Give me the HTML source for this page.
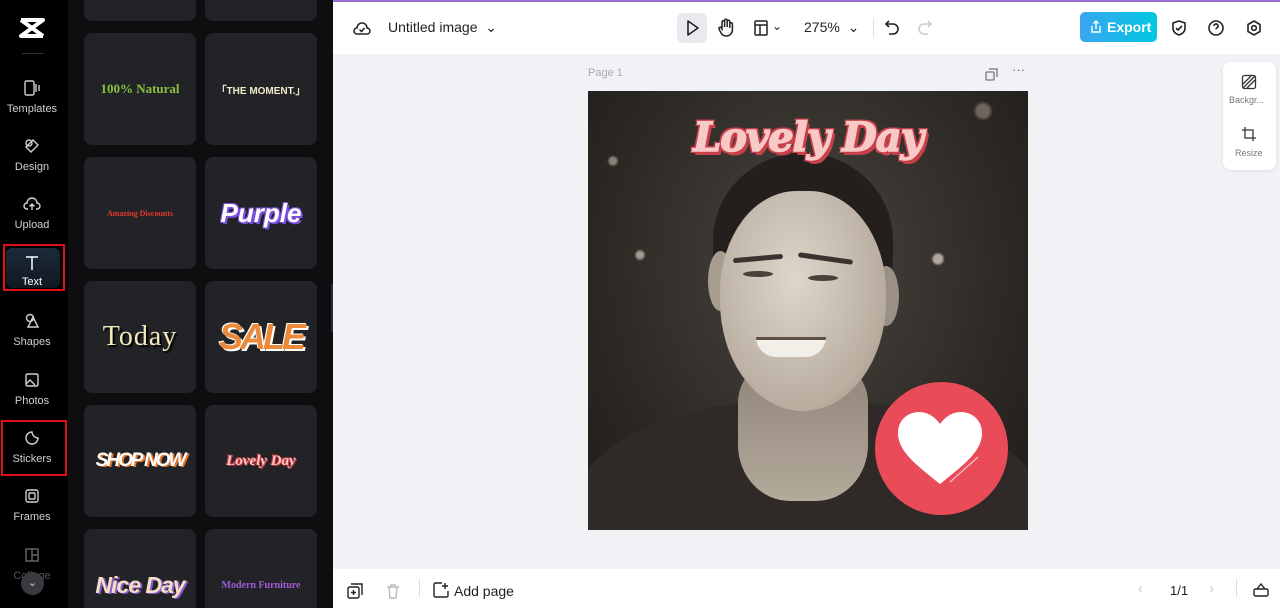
<!DOCTYPE html>
<html><head><meta charset="utf-8"><style>
*{box-sizing:border-box;margin:0;padding:0}
html,body{width:1280px;height:608px;overflow:hidden}
body{font-family:"Liberation Sans",sans-serif;background:#fff;position:relative}
.nav{position:absolute;left:0;top:0;width:68px;height:608px;background:#000;overflow:hidden}
.nav .it{position:absolute;left:0;width:64px;text-align:center;color:#cfd0d4;font-size:11px}
.nav .it svg{display:block;margin:0 auto 3px}
.panel{position:absolute;left:68px;top:0;width:265px;height:608px;background:#0e0e10;overflow:hidden}
.card{position:absolute;width:112px;height:112px;background:#222327;border-radius:8px;display:flex;align-items:center;justify-content:center;text-align:center}
.top{position:absolute;left:333px;top:0;right:0;height:54px;background:#fff;border-top:2px solid #9a6dd0}
.canvasbg{position:absolute;left:333px;top:54px;right:0;height:515px;background:#f0f2f5}
.bot{position:absolute;left:333px;top:569px;right:0;height:39px;background:#fff}
.ic{position:absolute}
</style></head><body>
<div class="nav">
  <svg class="ic" style="left:18px;top:17px" width="28" height="22" viewBox="0 0 28 22"><path d="M3 3h22L3 19h22M3 3l22 16" stroke="#fff" stroke-width="4" fill="none" stroke-linejoin="round"/></svg>
  <div style="position:absolute;left:22px;top:53px;width:22px;height:1px;background:#333"></div>
  <div class="it" style="top:79px"><svg width="18" height="18" viewBox="0 0 18 18" fill="none" stroke="#cfd0d4" stroke-width="1.4" style="margin-bottom:6px"><rect x="2" y="2" width="9" height="14" rx="1.5"/><path d="M13 5v8M16 6v6"/></svg>Templates</div>
  <div class="it" style="top:137px"><svg width="18" height="18" viewBox="0 0 18 18" fill="none" stroke="#cfd0d4" stroke-width="1.4" style="margin-bottom:6px"><circle cx="6" cy="6" r="3"/><path d="M10 3l5 5-7 7-5-5z"/></svg>Design</div>
  <div class="it" style="top:195px"><svg width="18" height="18" viewBox="0 0 18 18" fill="none" stroke="#cfd0d4" stroke-width="1.4" style="margin-bottom:6px"><path d="M5 14H4a3 3 0 010-6 5 5 0 0110 0 3 3 0 010 6h-1M9 15V9M6.5 11.5L9 9l2.5 2.5"/></svg>Upload</div>
  <div style="position:absolute;left:6px;top:248px;width:54px;height:40px;border-radius:6px;background:linear-gradient(#1c2a38,#101822)"></div>
  <div style="position:absolute;left:3px;top:244px;width:62px;height:47px;border:2px solid #e0101a"></div>
  <div class="it" style="top:254px;color:#fff"><svg width="18" height="18" viewBox="0 0 18 18" fill="none" stroke="#fff" stroke-width="1.5" style="margin-bottom:4px"><path d="M3 3h12M9 3v13"/></svg>Text</div>
  <div class="it" style="top:312px"><svg width="18" height="18" viewBox="0 0 18 18" fill="none" stroke="#cfd0d4" stroke-width="1.4" style="margin-bottom:6px"><circle cx="7" cy="6" r="3.5"/><path d="M10 5l5 10H5z"/></svg>Shapes</div>
  <div class="it" style="top:371px"><svg width="18" height="18" viewBox="0 0 18 18" fill="none" stroke="#cfd0d4" stroke-width="1.4" style="margin-bottom:6px"><rect x="3" y="3" width="12" height="12" rx="1.5"/><path d="M3 13l4-4 5 5M11 7h.1"/></svg>Photos</div>
  <div style="position:absolute;left:1px;top:420px;width:66px;height:56px;border:2px solid #e0101a"></div>
  <div class="it" style="top:429px"><svg width="18" height="18" viewBox="0 0 18 18" fill="none" stroke="#cfd0d4" stroke-width="1.4" style="margin-bottom:6px"><path d="M9 3a6 6 0 106 6c-3 0-6-3-6-6z"/></svg>Stickers</div>
  <div class="it" style="top:487px"><svg width="18" height="18" viewBox="0 0 18 18" fill="none" stroke="#cfd0d4" stroke-width="1.4" style="margin-bottom:6px"><rect x="3" y="3" width="12" height="12" rx="2"/><rect x="6" y="6" width="6" height="6" rx="1"/></svg>Frames</div>
  <div class="it" style="top:546px;color:#555;height:40px;overflow:hidden"><svg width="18" height="18" viewBox="0 0 18 18" fill="none" stroke="#666" stroke-width="1.4" style="margin-bottom:6px"><rect x="3" y="3" width="12" height="12"/><path d="M9 3v12M9 9h6"/></svg>Collage</div>
  <div style="position:absolute;left:21px;top:572px;width:23px;height:23px;border-radius:50%;background:#3a3b40;color:#ccc;font-size:11px;text-align:center;line-height:22px">⌄</div>
</div>
<div class="panel">
  <div class="card" style="left:16px;top:0;height:21px;border-radius:0 0 8px 8px"></div><div class="card" style="left:137px;top:0;height:21px;border-radius:0 0 8px 8px"></div>
  <div class="card" style="left:16px;top:33px;color:#8ac23c;font-family:'Liberation Serif',serif;font-weight:bold;font-size:13px">100% Natural</div>
  <div class="card" style="left:137px;top:33px;color:#f0ecc8;font-weight:bold;font-size:10px">「THE MOMENT.」</div>
  <div class="card" style="left:16px;top:157px;color:#e23a2a;font-family:'Liberation Serif',serif;font-weight:bold;font-size:8px">Amazing Discounts</div>
  <div class="card" style="left:137px;top:157px;color:#fff;font-weight:bold;font-style:italic;font-size:26px;text-shadow:2px 2px 0 #7b4fe0,-1px -1px 0 #7b4fe0,1px -1px 0 #7b4fe0,-1px 1px 0 #7b4fe0">Purple</div>
  <div class="card" style="left:16px;top:281px;color:#f2e9b8;font-family:'Liberation Serif',serif;font-size:28px;letter-spacing:1px;text-shadow:2px 2px 1px #000">Today</div>
  <div class="card" style="left:137px;top:281px;color:#ec8a3c;font-weight:bold;font-style:italic;font-size:36px;letter-spacing:-3px;text-shadow:2px 2px 0 #fff,-1px -1px 0 #fff">SALE</div>
  <div class="card" style="left:16px;top:405px;color:#fff;font-weight:bold;font-style:italic;font-size:19px;letter-spacing:-2px;text-shadow:2px 1px 0 #e8762a">SHOP NOW</div>
  <div class="card" style="left:137px;top:405px;color:#f9c6c6;font-family:'Liberation Serif',serif;font-weight:bold;font-style:italic;font-size:15px;text-shadow:1px 1px 0 #c8333c,-1px -1px 0 #c8333c">Lovely Day</div>
  <div class="card" style="left:16px;top:529px;height:79px;border-radius:8px 8px 0 0;padding-top:33px;color:#f3dfc4;font-weight:bold;font-style:italic;font-size:23px;letter-spacing:-1px;text-shadow:2px 1px 0 #8a5ad0">Nice Day</div>
  <div class="card" style="left:137px;top:529px;height:79px;border-radius:8px 8px 0 0;padding-top:33px;color:#a35ad8;font-family:'Liberation Serif',serif;font-weight:bold;font-size:10px">Modern Furniture</div>
  <div style="position:absolute;left:263px;top:284px;width:8px;height:48px;background:#2a2b2f;border-radius:0 6px 6px 0"></div>
</div>
<div class="top">
  <svg class="ic" style="left:20px;top:17px" width="18" height="18" viewBox="0 0 18 18" fill="none" stroke="#222" stroke-width="1.5"><path d="M5 15H4a3 3 0 010-6 5 5 0 0110 0 3 3 0 010 6H5zM6.5 10.5l2 2 3-3.5"/></svg>
  <div style="position:absolute;left:55px;top:17px;font-size:14px;color:#222">Untitled image &nbsp;⌄</div>
  <div style="position:absolute;left:344px;top:11px;width:30px;height:30px;border-radius:6px;background:#e8eaee"></div>
  <svg class="ic" style="left:352px;top:17px" width="16" height="18" viewBox="0 0 16 18" fill="none" stroke="#222" stroke-width="1.6"><path d="M3 2l10 7-10 7z" stroke-linejoin="round"/></svg>
  <svg class="ic" style="left:384px;top:16px" width="18" height="20" viewBox="0 0 18 20" fill="none" stroke="#222" stroke-width="1.5"><path d="M5 11V4a1.3 1.3 0 012.6 0v5V2.5a1.3 1.3 0 012.6 0V9V3.5a1.3 1.3 0 012.6 0V10V6a1.3 1.3 0 012.6 0v6a6 6 0 01-6 6H9a6 6 0 01-5-3l-2-4a1.3 1.3 0 012-1.5z"/></svg>
  <svg class="ic" style="left:420px;top:17px" width="16" height="18" viewBox="0 0 16 18" fill="none" stroke="#222" stroke-width="1.5"><rect x="2" y="2" width="12" height="14" rx="1"/><path d="M2 6h12M7 6v10"/></svg>
  <div style="position:absolute;left:439px;top:17px;font-size:12px;color:#222">⌄</div>
  <div style="position:absolute;left:471px;top:17px;font-size:14px;color:#222">275% &nbsp;⌄</div>
  <div style="position:absolute;left:540px;top:17px;width:1px;height:18px;background:#ddd"></div>
  <svg class="ic" style="left:551px;top:17px" width="16" height="18" viewBox="0 0 16 18" fill="none" stroke="#222" stroke-width="1.6"><path d="M5 2L2 5l3 3M2 5h7a5 5 0 010 10H5"/></svg>
  <svg class="ic" style="left:584px;top:17px" width="16" height="18" viewBox="0 0 16 18" fill="none" stroke="#ccc" stroke-width="1.6"><path d="M11 2l3 3-3 3M14 5H7a5 5 0 000 10h4"/></svg>
  <div style="position:absolute;left:747px;top:10px;width:77px;height:30px;border-radius:5px;background:linear-gradient(90deg,#3aa5f0,#00c8e0);color:#fff;font-size:14px;font-weight:bold;line-height:30px;padding-left:27px">Export</div>
  <svg class="ic" style="left:757px;top:18px" width="12" height="14" viewBox="0 0 12 14" fill="none" stroke="#fff" stroke-width="1.4"><path d="M2 6v6h8V6M6 9V1M3.5 3.5L6 1l2.5 2.5"/></svg>
  <svg class="ic" style="left:837px;top:17px" width="18" height="18" viewBox="0 0 18 18" fill="none" stroke="#222" stroke-width="1.6"><path d="M9 2l6 2v5c0 4-3 6-6 7-3-1-6-3-6-7V4z M6 9l2 2 4-4"/></svg>
  <svg class="ic" style="left:874px;top:17px" width="18" height="18" viewBox="0 0 18 18" fill="none" stroke="#222" stroke-width="1.6"><circle cx="9" cy="9" r="7"/><path d="M7 7a2 2 0 113 1.7c-.7.4-1 .8-1 1.6M9 13v.1"/></svg>
  <svg class="ic" style="left:912px;top:17px" width="18" height="18" viewBox="0 0 18 18" fill="none" stroke="#222" stroke-width="1.6"><path d="M9 2l6 3.5v7L9 16l-6-3.5v-7z"/><circle cx="9" cy="9" r="2.3"/></svg>
</div>
<div class="canvasbg">
  <div style="position:absolute;left:255px;top:13px;font-size:11px;color:#aaa">Page 1</div>
  <svg class="ic" style="left:652px;top:14px" width="13" height="13" viewBox="0 0 13 13" fill="none" stroke="#777" stroke-width="1.3"><rect x="1" y="4" width="8" height="8" rx="1"/><path d="M4 1h8v8"/></svg>
  <div style="position:absolute;left:679px;top:8px;font-size:13px;color:#666">···</div>
  <div style="position:absolute;left:890px;top:8px;width:53px;height:108px;background:#fff;border-radius:8px;box-shadow:0 1px 4px rgba(0,0,0,.08)">
    <svg class="ic" style="left:18px;top:12px" width="16" height="16" viewBox="0 0 16 16" fill="none" stroke="#333" stroke-width="1.3"><rect x="1.5" y="1.5" width="13" height="13" rx="2"/><path d="M2 10l8-8M6 14l8-8M2 14l12-12"/></svg>
    <div style="position:absolute;left:6px;top:33px;font-size:9px;color:#777">Backgr...</div>
    <svg class="ic" style="left:18px;top:64px" width="16" height="16" viewBox="0 0 16 16" fill="none" stroke="#333" stroke-width="1.3"><path d="M4 1v11h11M1 4h11v11"/></svg>
    <div style="position:absolute;left:12px;top:86px;font-size:9px;color:#777">Resize</div>
  </div>
  <div style="position:absolute;left:255px;top:37px;width:440px;height:439px;overflow:hidden;background:radial-gradient(ellipse at 50% 40%,#4a453f 0%,#2e2a26 60%,#1e1b19 100%)">
    <div style="position:absolute;left:0;top:0;width:440px;height:439px;background:radial-gradient(circle at 25px 70px,#8a8175 3px,transparent 6px),radial-gradient(circle at 52px 164px,#a39a8d 3px,transparent 6px),radial-gradient(circle at 350px 168px,#b0a89c 4px,transparent 7px),radial-gradient(circle at 427px 377px,#e0dad2 5px,transparent 7px),radial-gradient(circle at 395px 20px,#6e665c 6px,transparent 10px)"></div>
    <div style="position:absolute;left:-20px;top:310px;width:480px;height:129px;border-radius:45% 45% 0 0 / 90% 90% 0 0;background:#2f2a27"></div>
    <div style="position:absolute;left:150px;top:270px;width:130px;height:140px;background:linear-gradient(#8f8477,#b4aa9c);border-radius:30% 30% 40% 40%"></div>
    <div style="position:absolute;left:125px;top:62px;width:180px;height:175px;border-radius:50% 50% 40% 40%;background:#241f1c"></div>
    <div style="position:absolute;left:120px;top:160px;width:25px;height:60px;border-radius:50%;background:#a89e90"></div>
    <div style="position:absolute;left:285px;top:175px;width:26px;height:60px;border-radius:50%;background:#9a9083"></div>
    <div style="position:absolute;left:132px;top:100px;width:166px;height:220px;border-radius:46% 46% 50% 50%;background:radial-gradient(ellipse at 45% 40%,#ded6cb,#b8ad9f 70%,#8e8376)"></div>
    <div style="position:absolute;left:145px;top:165px;width:50px;height:5px;background:#3a332e;border-radius:3px;transform:rotate(-5deg)"></div>
    <div style="position:absolute;left:210px;top:165px;width:55px;height:5px;background:#3a332e;border-radius:3px;transform:rotate(8deg)"></div>
    <div style="position:absolute;left:155px;top:180px;width:30px;height:6px;background:#4a413a;border-radius:50%"></div>
    <div style="position:absolute;left:220px;top:184px;width:30px;height:6px;background:#4a413a;border-radius:50%"></div>
    <div style="position:absolute;left:168px;top:246px;width:70px;height:20px;background:#f2eee8;border-radius:0 0 40px 40px;border-top:3px solid #5b4f46"></div>
    <div style="position:absolute;left:0;width:440px;top:22px;text-align:center;font-family:'DejaVu Serif','Liberation Serif',serif;font-weight:bold;font-style:italic;font-size:40px;line-height:50px;color:#f9c9c7;letter-spacing:-1px;-webkit-text-stroke:1.5px #f9c9c7;text-shadow:2px 2px 0 #c8404a,-2px -2px 0 #c8404a,2px -2px 0 #c8404a,-2px 2px 0 #c8404a,3px 4px 0 #c8404a">Lovely Day</div>
    <div style="position:absolute;left:287px;top:291px;width:133px;height:133px;border-radius:50%;background:#e94b59"></div>
    <svg class="ic" style="left:307px;top:318px" width="90" height="80" viewBox="0 0 90 80"><path d="M45 75C20 55 3 42 3 24 3 11 13 3 24 3c9 0 16 5 21 12 5-7 12-12 21-12 11 0 21 8 21 21 0 18-17 31-42 51z" fill="#fff"/><path d="M55 73l28-25" stroke="#f6b8bd" stroke-width="1.5"/></svg>
  </div>
</div>
<div class="bot">
  <svg class="ic" style="left:14px;top:14px" width="16" height="16" viewBox="0 0 16 16" fill="none" stroke="#222" stroke-width="1.4"><rect x="1" y="4" width="11" height="11" rx="1.5"/><path d="M4 1h11v11M6.5 7v5M4 9.5h5"/></svg>
  <svg class="ic" style="left:53px;top:14px" width="14" height="16" viewBox="0 0 14 16" fill="none" stroke="#bbb" stroke-width="1.4"><path d="M1 4h12M5 4V2h4v2M3 4l1 11h6l1-11"/></svg>
  <div style="position:absolute;left:86px;top:10px;width:1px;height:18px;background:#ddd"></div>
  <svg class="ic" style="left:100px;top:13px" width="16" height="16" viewBox="0 0 16 16" fill="none" stroke="#222" stroke-width="1.4"><path d="M9 1H2.5A1.5 1.5 0 001 2.5v11A1.5 1.5 0 002.5 15h11a1.5 1.5 0 001.5-1.5V9M12 1v6M9 4h6"/></svg>
  <div style="position:absolute;left:121px;top:14px;font-size:14px;color:#222">Add page</div>
  <div style="position:absolute;left:805px;top:11px;font-size:15px;color:#ccc">‹</div>
  <div style="position:absolute;left:837px;top:14px;font-size:13px;color:#222">1/1</div>
  <div style="position:absolute;left:876px;top:11px;font-size:15px;color:#ccc">›</div>
  <div style="position:absolute;left:903px;top:10px;width:1px;height:18px;background:#ddd"></div>
  <svg class="ic" style="left:920px;top:13px" width="16" height="16" viewBox="0 0 16 16" fill="none" stroke="#222" stroke-width="1.4"><rect x="1" y="7" width="14" height="7" rx="1.5"/><path d="M4 7l4-5 4 5"/></svg>
</div>
</body></html>
